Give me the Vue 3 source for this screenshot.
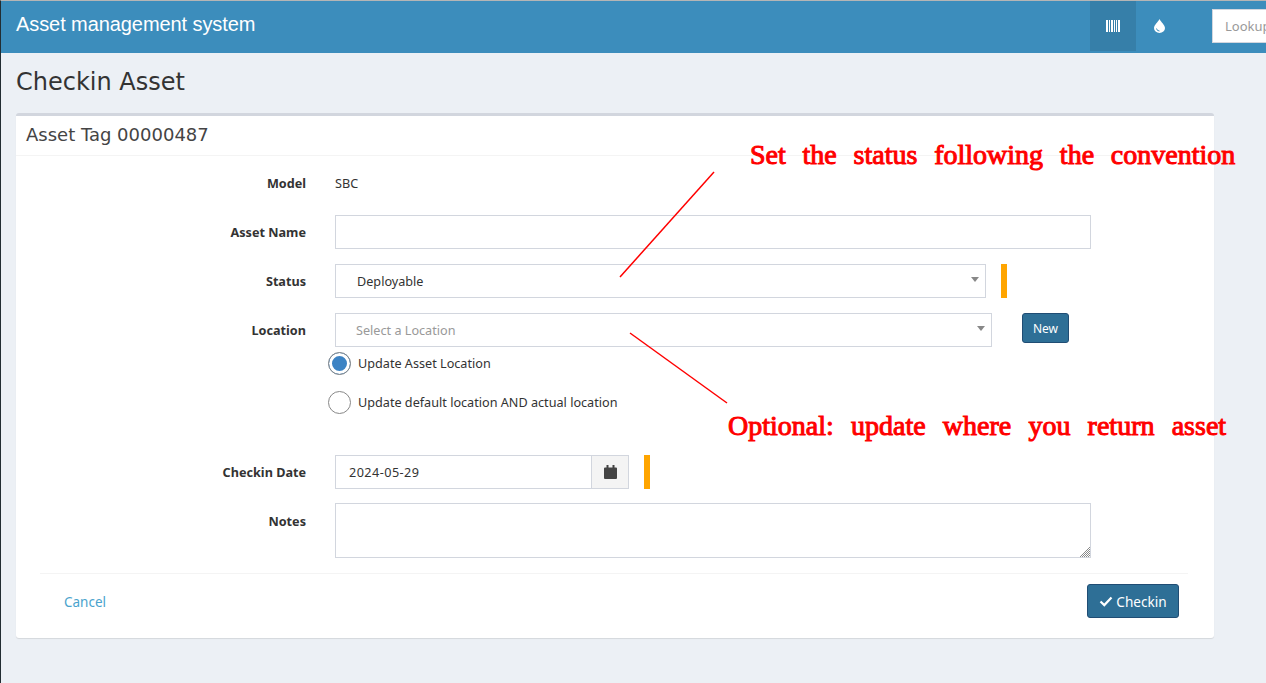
<template>
  <div class="page">
    <header class="topbar">
      <div class="brand">Asset management system</div>
      <nav class="topnav">
        <a class="nav-item active">
          <svg width="14" height="12" viewBox="0 0 14 12" fill="#fff">
            <rect x="0" width="2" height="12" /><rect x="3" width="1" height="12" /><rect x="5" width="2" height="12" />
            <rect x="8" width="1" height="12" /><rect x="10" width="1" height="12" /><rect x="12" width="2" height="12" />
          </svg>
        </a>
        <a class="nav-item">
          <svg width="11" height="14" viewBox="0 0 11 14">
            <path d="M5.5 0C7 3 11 6 11 9a5.5 5 0 0 1-11 0C0 6 4 3 5.5 0z" fill="#fff" />
            <path d="M2.5 9.5a3 3 0 0 0 3 2.5" fill="none" stroke="#3c8dbc" stroke-width="1" />
          </svg>
        </a>
        <input class="lookup" type="text" placeholder="Lookup" />
      </nav>
    </header>

    <main class="content">
      <h1>Checkin Asset</h1>
      <section class="box">
        <div class="box-header">Asset Tag 00000487</div>
        <form class="box-body" @submit.prevent>
          <div class="row static">
            <label>Model</label>
            <p>SBC</p>
          </div>
          <div class="row">
            <label>Asset Name</label>
            <input class="field wide" type="text" />
          </div>
          <div class="row">
            <label>Status</label>
            <div class="select status-select">
              <span>Deployable</span><i class="caret"></i>
            </div>
            <span class="required"></span>
          </div>
          <div class="row location">
            <label>Location</label>
            <div class="select location-select placeholder">
              <span>Select a Location</span><i class="caret"></i>
            </div>
            <button class="btn new" type="button">New</button>
          </div>
          <div class="radios">
            <div v-for="opt in options" :key="opt.id" class="radio">
              <span class="circle" :class="{ on: opt.id === picked }"></span>
              {{ opt.label }}
            </div>
          </div>
          <div class="row date-row">
            <label>Checkin Date</label>
            <div class="date">
              <span class="date-value">2024-05-29</span>
              <span class="date-addon">
                <svg width="13" height="14" viewBox="0 0 13 14" fill="#444">
                  <rect x="2.5" y="0" width="2" height="3" /><rect x="8.5" y="0" width="2" height="3" />
                  <path d="M0 3.5a1 1 0 0 1 1-1h11a1 1 0 0 1 1 1V13a1 1 0 0 1-1 1H1a1 1 0 0 1-1-1z" />
                </svg>
              </span>
            </div>
            <span class="required"></span>
          </div>
          <div class="row notes">
            <label>Notes</label>
            <div class="notes-wrap">
              <textarea class="field wide"></textarea>
              <svg class="grip" width="10" height="10" viewBox="0 0 10 10" stroke="#8a8a8a" stroke-width="1">
                <path d="M0 10L10 0M2 10L10 2M4 10L10 4M6 10L10 6M8 10L10 8" />
              </svg>
            </div>
          </div>
          <div class="box-footer">
            <a class="cancel">Cancel</a>
            <button class="btn checkin" type="button">
              <svg width="14" height="11" viewBox="0 0 14 11"><path d="M1.5 5.5l3.8 3.6L12.5 1.5" fill="none" stroke="#fff" stroke-width="2.2" /></svg>
              Checkin
            </button>
          </div>
        </form>
      </section>
    </main>

    <!-- anotaciones encima de la captura -->
    <svg class="marks" width="1266" height="683">
      <line x1="714" y1="172" x2="620" y2="277" stroke="#f00" stroke-width="1.5" />
      <line x1="630" y1="333" x2="727" y2="403" stroke="#f00" stroke-width="1.5" />
    </svg>
    <div class="note note-status">Set the status following the convention</div>
    <div class="note note-location">Optional: update where you return asset</div>
  </div>
</template>

<script setup>
const picked = 'asset'
const options = [
  { id: 'asset', label: 'Update Asset Location' },
  { id: 'default', label: 'Update default location AND actual location' },
]
</script>

<style>
html, body {
  margin: 0;
  background: #ecf0f5;
}
</style>

<style scoped>
.page {
  position: relative;
  width: 1266px;
  height: 683px;
  overflow: hidden;
  box-sizing: border-box;
  background: #ecf0f5;
  border-left: 1px solid #222d32;
  border-top: 1px solid #b5b5b5;
  font-family: "Noto Sans", sans-serif;
  font-size: 12.65px;
  color: #333;
}
.topbar {
  display: flex;
  justify-content: space-between;
  height: 52px;
  background: #3c8dbc;
  color: #fff;
}
.brand {
  padding: 11px 0 0 15px;
  font-family: "Liberation Sans", sans-serif;
  font-size: 20px;
  line-height: 24px;
  letter-spacing: -0.08px;
}
.topnav {
  display: flex;
  align-items: flex-start;
}
.nav-item {
  display: flex;
  align-items: center;
  justify-content: center;
  width: 46px;
  height: 50px;
}
.nav-item.active {
  background: #367fa9;
}
.lookup {
  width: 54px;
  height: 34px;
  box-sizing: border-box;
  margin: 8px 0 0 30px;
  padding: 0 0 0 12px;
  border: 1px solid #d2d6de;
  border-right: 0;
  font-family: "Noto Sans", sans-serif;
  font-size: 13px;
  outline: none;
}
.lookup::placeholder {
  color: #999;
}
.content {
  padding: 13px 52px 0 15px;
}
h1 {
  margin: 0 0 15px;
  font-family: "DejaVu Sans", sans-serif;
  font-size: 24px;
  font-weight: 400;
  line-height: 32px;
}
.box {
  height: 525px;
  box-sizing: border-box;
  background: #fff;
  border-top: 3px solid #d2d6de;
  border-radius: 3px;
  box-shadow: 0 1px 1px rgba(0, 0, 0, 0.1);
}
.box-header {
  height: 39px;
  padding-left: 10px;
  border-bottom: 1px solid #f4f4f4;
  font-family: "DejaVu Sans", sans-serif;
  font-size: 18px;
  line-height: 37px;
  color: #444;
}
.box-body {
  padding: 9px 0 0 24px;
}
.row {
  display: flex;
  align-items: flex-start;
  margin-bottom: 15px;
}
.row label {
  width: 266px;
  margin-right: 29px;
  padding-top: 7px;
  text-align: right;
  font-weight: 700;
  line-height: 20px;
}
.row p {
  margin: 0;
  line-height: 20px;
}
.row.static {
  margin-bottom: 22px;
  padding-top: 8px;
}
.row.static label {
  padding-top: 0;
}
.field {
  display: block;
  box-sizing: border-box;
  height: 34px;
  border: 1px solid #d2d6de;
  background: #fff;
  outline: none;
}
.wide {
  width: 756px;
}
.select {
  display: flex;
  align-items: center;
  justify-content: space-between;
  height: 34px;
  box-sizing: border-box;
  padding: 0 6px 0 21px;
  border: 1px solid #d2d6de;
}
.status-select {
  width: 651px;
}
.location-select {
  width: 657px;
  padding-left: 20px;
}
.placeholder {
  color: #999;
}
.caret {
  margin: -3px 0 0;
  border-left: 4px solid transparent;
  border-right: 4px solid transparent;
  border-top: 5px solid #888;
}
.required {
  width: 6px;
  height: 34px;
  margin-left: 15px;
  background: #ffa500;
}
.btn {
  box-sizing: border-box;
  border: 1px solid #204d74;
  border-radius: 3px;
  background: #2e6f96;
  color: #fff;
  font-family: inherit;
  font-size: 12px;
}
.new {
  width: 47px;
  height: 30px;
  margin-left: 30px;
  padding: 0;
}
.row.location {
  margin-bottom: 0;
}
.radios {
  display: flex;
  flex-direction: column;
  gap: 15px;
  margin: 4px 0 41px 288px;
}
.radio {
  display: flex;
  align-items: center;
  gap: 7px;
  height: 24px;
}
.circle {
  box-sizing: border-box;
  width: 23px;
  height: 23px;
  border: 1px solid #888;
  border-radius: 50%;
  background: #fff;
}
.circle.on {
  background: #3c83c4;
  box-shadow: inset 0 0 0 3px #fff;
}
.date {
  display: flex;
  width: 294px;
  height: 34px;
  box-sizing: border-box;
  border: 1px solid #d2d6de;
}
.date-value {
  flex: 1;
  padding-left: 13px;
  line-height: 32px;
  letter-spacing: 0.45px;
}
.date-addon {
  display: flex;
  align-items: center;
  justify-content: center;
  width: 36px;
  border-left: 1px solid #d2d6de;
  background: #f4f4f4;
}
.row.date-row {
  margin-bottom: 14px;
}
.row.notes label {
  padding-top: 8px;
}
.notes-wrap {
  position: relative;
}
textarea.field {
  height: 55px;
  resize: none;
}
.grip {
  position: absolute;
  right: 1px;
  bottom: 1px;
}
.box-footer {
  display: flex;
  justify-content: space-between;
  align-items: flex-start;
  width: 1148px;
  height: 45px;
  padding-top: 10px;
  box-sizing: content-box;
  border-top: 1px solid #f4f4f4;
}
.cancel {
  padding: 8px 0 0 24px;
  color: #4aa3cd;
  font-size: 13.5px;
  line-height: 20px;
}
.checkin {
  display: flex;
  align-items: center;
  justify-content: center;
  gap: 3px;
  width: 92px;
  height: 34px;
  margin-right: 9px;
  padding: 0;
  font-size: 13.6px;
}
.marks {
  position: absolute;
  left: -1px;
  top: -1px;
  pointer-events: none;
}
.note {
  position: absolute;
  font-family: "Liberation Serif", serif;
  font-size: 28px;
  line-height: 34px;
  color: #f00;
  -webkit-text-stroke: 1px #f00;
  white-space: nowrap;
}
.note-status {
  left: 749px;
  top: 137px;
  word-spacing: 9.8px;
}
.note-location {
  left: 727px;
  top: 408px;
  word-spacing: 10.2px;
}
</style>
